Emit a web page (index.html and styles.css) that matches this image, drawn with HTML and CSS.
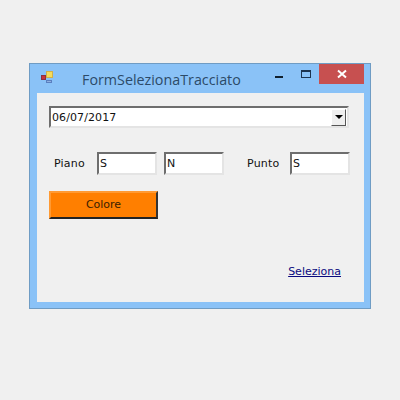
FILE: index.html
```html
<!DOCTYPE html>
<html>
<head>
    <title>FormSelezionaTracciato</title>
    <link rel="stylesheet" href="styles.css">
</head>
<body>
    <div class="finestra">
        <div class="titolo">
            <svg class="icona" width="16" height="16" viewBox="0 0 16 16">
                <rect x="7.5" y="2.5" width="6" height="6" fill="#f5dc5a" stroke="#d0b04a"/>
                <rect x="2.5" y="6.5" width="4" height="4" fill="#c8343c" stroke="#8c3040"/>
                <rect x="7.5" y="11.5" width="5" height="2" fill="#8fb0e0" stroke="#5a7fc0"/>
            </svg>
            <span class="nome">FormSelezionaTracciato</span>
            <div class="comandi">
                <div class="btn-min"><div class="trattino"></div></div>
                <div class="btn-max"><div class="quadro"></div></div>
                <div class="btn-chiudi">
                    <svg width="10" height="10" viewBox="0 0 10 10">
                        <path d="M1 1.5L9 8.5M9 1.5L1 8.5" stroke="#fff" stroke-width="2"/>
                    </svg>
                </div>
            </div>
        </div>
        <div class="contenuto">
            <div class="combo">
                <span class="combo-testo">06/07/2017</span>
                <div class="combo-freccia"><div class="triangolo"></div></div>
            </div>
            <div class="riga">
                <label class="etichetta piano">Piano</label>
                <input class="campo" type="text" value="S">
                <input class="campo secondo" type="text" value="N">
                <label class="etichetta punto">Punto</label>
                <input class="campo" type="text" value="S">
            </div>
            <button class="colore" type="button">Colore</button>
            <div class="fondo"><a class="link" href="#">Seleziona</a></div>
        </div>
    </div>
</body>
</html>
```

FILE: styles.css
```css
body { margin: 0; background: #f0f0f0; font-family: "DejaVu Sans", sans-serif; font-size: 11px; color: #111; }
.finestra { width: 342px; height: 246px; margin: 63px 0 0 29px; box-sizing: border-box; background: #8ac2f7; border: 1px solid #6f9cc4; display: flex; flex-direction: column; }
.titolo { height: 29px; display: flex; align-items: flex-start; flex: none; }
.icona { margin: 5px 0 0 9px; }
.nome { margin: 6px 0 0 27px; font-family: "Open Sans", sans-serif; font-size: 14.3px; line-height: 20px; color: #2c4a68; }
.comandi { margin-left: auto; margin-right: 6px; display: flex; }
.btn-min { width: 26px; height: 20px; display: flex; justify-content: center; padding-top: 12px; box-sizing: border-box; }
.trattino { width: 8px; height: 2px; background: #10202e; }
.btn-max { width: 27px; height: 20px; display: flex; justify-content: center; padding-top: 6px; box-sizing: border-box; }
.quadro { width: 10px; height: 8px; box-sizing: border-box; border: 1px solid #1c3450; border-top-width: 2px; }
.btn-chiudi { width: 45px; height: 20px; background: #c75050; display: flex; align-items: center; justify-content: center; }
.contenuto { margin: 0 6px 6px 7px; flex: 1; background: #f0f0f0; padding: 13px 14px 0 12px; display: flex; flex-direction: column; }
.combo { width: 300px; height: 22px; box-sizing: border-box; background: #fff; border: 2px solid; border-color: #6e6e6e #e4e4e4 #e4e4e4 #6e6e6e; display: flex; align-items: center; justify-content: space-between; }
.combo-testo { padding-left: 1px; letter-spacing: 0.1px; }
.combo-freccia { width: 15px; height: 17px; margin-right: 1px; background: #efefef; border: 1px solid; border-color: #fff #555 #555 #fff; box-sizing: border-box; display: flex; align-items: center; justify-content: center; }
.triangolo { border: 4px solid transparent; border-top-color: #000; border-bottom-width: 0; }
.riga { display: flex; align-items: center; margin-top: 24px; }
.etichetta { width: 32px; letter-spacing: 0.2px; }
.piano { margin: 0 11px 0 5px; }
.punto { margin: 0 11px 0 23px; }
.campo { width: 60px; height: 23px; box-sizing: border-box; padding: 0 0 0 1px; font-family: inherit; font-size: 11px; color: #111; background: #fff; border: 2px solid; border-color: #6e6e6e #e4e4e4 #e4e4e4 #6e6e6e; outline: none; }
.secondo { margin-left: 7px; }
.colore { width: 109px; height: 28px; margin-top: 16px; padding: 0 0 2px; font-family: inherit; font-size: 11px; color: #3a2000; background: #ff7f00; border: 2px solid; border-color: #ff9a33 #333 #222 #ff9a33; }
.fondo { display: flex; justify-content: flex-end; margin-top: 46px; padding-right: 9px; }
.link { color: #0a0a80; }
```
